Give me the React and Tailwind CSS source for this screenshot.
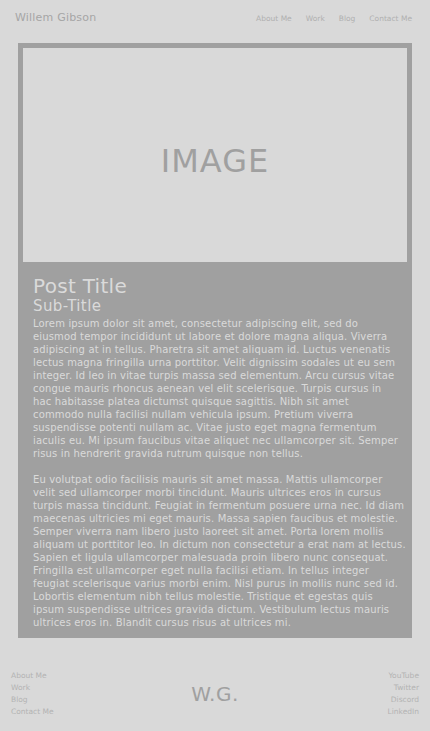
import React from "react";

const p1 = [
  "Lorem ipsum dolor sit amet, consectetur adipiscing elit, sed do",
  "eiusmod tempor incididunt ut labore et dolore magna aliqua. Viverra",
  "adipiscing at in tellus. Pharetra sit amet aliquam id. Luctus venenatis",
  "lectus magna fringilla urna porttitor. Velit dignissim sodales ut eu sem",
  "integer. Id leo in vitae turpis massa sed elementum. Arcu cursus vitae",
  "congue mauris rhoncus aenean vel elit scelerisque. Turpis cursus in",
  "hac habitasse platea dictumst quisque sagittis. Nibh sit amet",
  "commodo nulla facilisi nullam vehicula ipsum. Pretium viverra",
  "suspendisse potenti nullam ac. Vitae justo eget magna fermentum",
  "iaculis eu. Mi ipsum faucibus vitae aliquet nec ullamcorper sit. Semper",
  "risus in hendrerit gravida rutrum quisque non tellus.",
];

const p2 = [
  "Eu volutpat odio facilisis mauris sit amet massa. Mattis ullamcorper",
  "velit sed ullamcorper morbi tincidunt. Mauris ultrices eros in cursus",
  "turpis massa tincidunt. Feugiat in fermentum posuere urna nec. Id diam",
  "maecenas ultricies mi eget mauris. Massa sapien faucibus et molestie.",
  "Semper viverra nam libero justo laoreet sit amet. Porta lorem mollis",
  "aliquam ut porttitor leo. In dictum non consectetur a erat nam at lectus.",
  "Sapien et ligula ullamcorper malesuada proin libero nunc consequat.",
  "Fringilla est ullamcorper eget nulla facilisi etiam. In tellus integer",
  "feugiat scelerisque varius morbi enim. Nisl purus in mollis nunc sed id.",
  "Lobortis elementum nibh tellus molestie. Tristique et egestas quis",
  "ipsum suspendisse ultrices gravida dictum. Vestibulum lectus mauris",
  "ultrices eros in. Blandit cursus risus at ultrices mi.",
];

const navLinks = ["About Me", "Work", "Blog", "Contact Me"];
const socialLinks = ["YouTube", "Twitter", "Discord", "LinkedIn"];

const Paragraph = ({ lines, className }) => (
  <p className={`text-[10px] leading-[13px] tracking-[0.15px] ${className}`}>
    {lines.map((line) => (
      <span key={line} className="block whitespace-nowrap">
        {line}
      </span>
    ))}
  </p>
);

export default function App() {
  return (
    <div className="min-h-[731px] w-[430px] bg-[#d9d9d9] font-['DejaVu_Sans',sans-serif]">
      <header className="flex h-[36px] items-center justify-between pl-[15px] pr-[18px] pt-px">
        <span className="text-[11px] tracking-[0.2px] text-[#a6a6a6]">Willem Gibson</span>
        <nav className="flex gap-[14px] text-[7.5px] text-[#b0b0b0]">
          {navLinks.map((l) => (
            <a key={l}>{l}</a>
          ))}
        </nav>
      </header>

      <main className="mx-[18px] mt-[7px] bg-[#a0a0a0] pb-[9px]">
        <div className="p-[5px] pb-0">
          <div className="flex h-[214px] items-center justify-center bg-[#d9d9d9] pt-[12px]">
            <span className="text-[32px] tracking-[1px] text-[#a0a0a0]">IMAGE</span>
          </div>
        </div>
        <div className="pl-[15px] pr-[9px] pt-[14px] text-[#dadada]">
          <h1 className="text-[20px] leading-[20px] tracking-[0.3px]">Post Title</h1>
          <h2 className="text-[15px] leading-[20px] tracking-[0.4px]">Sub-Title</h2>
          <Paragraph lines={p1} className="mt-px" />
          <Paragraph lines={p2} className="mt-[13px]" />
        </div>
      </main>

      <footer className="grid grid-cols-3 items-center px-[11px] pt-[32px]">
        <div className="flex flex-col items-start text-[7.5px] leading-[12px] text-[#b3b3b3]">
          {navLinks.map((l) => (
            <a key={l}>{l}</a>
          ))}
        </div>
        <span className="text-center text-[20px] tracking-[0.5px] text-[#a0a0a0]">W.G.</span>
        <div className="flex flex-col items-end text-[7.5px] leading-[12px] text-[#b3b3b3]">
          {socialLinks.map((l) => (
            <a key={l}>{l}</a>
          ))}
        </div>
      </footer>
    </div>
  );
}
